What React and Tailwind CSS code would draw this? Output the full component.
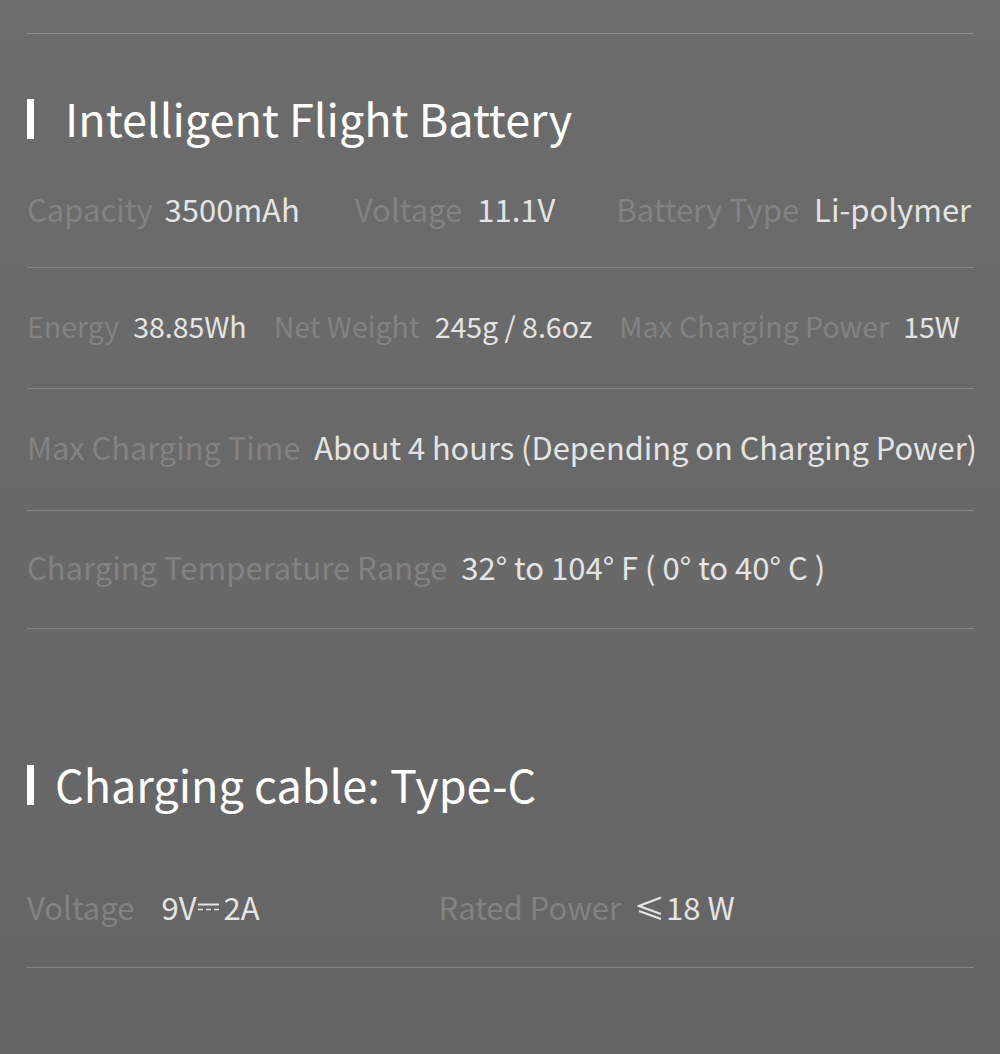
import React from 'react';

const FONT = { fontFamily: '"Noto Sans CJK SC", "Noto Sans", "DejaVu Sans", sans-serif' };

// label in dim grey, value in light grey
const Spec = ({ label, value, gap = 'ml-[15px]', className = '' }) => (
  <div className={`flex items-center whitespace-nowrap ${className}`}>
    <span className="text-[#828282]">{label}</span>
    <span className={`${gap} flex items-center text-[#e4e4e4]`}>{value}</span>
  </div>
);

const Heading = ({ children, gap }) => (
  <div className="flex items-center h-[60px]">
    <div className="w-[7px] h-[40px] bg-white" />
    <h2 className={`${gap} pb-[4px] text-[45px] leading-none text-white font-normal`}>{children}</h2>
  </div>
);

const DcSymbol = () => (
  <svg width="21" height="8" viewBox="0 0 21 8" className="mx-[1px] -mt-[2px]">
    <line x1="0" y1="1.5" x2="21" y2="1.5" stroke="#e4e4e4" strokeWidth="2" />
    <line x1="0" y1="6.5" x2="21" y2="6.5" stroke="#e4e4e4" strokeWidth="1.6" strokeDasharray="5 3" />
  </svg>
);

const LeqSymbol = () => (
  <svg width="25" height="24" viewBox="0 0 25 24" className="mr-[4px]">
    <polyline points="24,1.5 2,10 24,18" fill="none" stroke="#e4e4e4" strokeWidth="2.2" />
    <line x1="2" y1="15" x2="24" y2="23" stroke="#e4e4e4" strokeWidth="2.2" />
  </svg>
);

export default function App() {
  return (
    <div
      className="w-full min-h-[1054px] bg-gradient-to-b from-[#6c6c6c] to-[#656565]"
      style={FONT}
    >
      <div className="pl-[27px] pr-[26px] pt-[33px]">
        {/* top divider */}
        <div className="border-t border-[#8c8c8c]" />

        {/* Intelligent Flight Battery */}
        <div className="mt-[55px]">
          <Heading gap="ml-[31px]">Intelligent Flight Battery</Heading>
        </div>

        <div className="flex items-center h-[119px] pt-[2px] text-[31px] border-b border-[#858585]">
          <Spec label="Capacity" value="3500mAh" gap="ml-[12px]" />
          <Spec label="Voltage" value="11.1V" className="ml-[55px]" />
          <Spec label="Battery Type" value="Li-polymer" className="ml-[61px]" />
        </div>

        <div className="flex items-center h-[121px] pb-[4px] text-[28.5px] border-b border-[#858585]">
          <Spec label="Energy" value="38.85Wh" gap="ml-[14px]" />
          <Spec label="Net Weight" value="245g / 8.6oz" className="ml-[27px]" />
          <Spec label="Max Charging Power" value="15W" gap="ml-[14px]" className="ml-[27px]" />
        </div>

        <div className="flex items-center h-[122px] pb-[4px] text-[30.8px] border-b border-[#858585]">
          <Spec label="Max Charging Time" value="About 4 hours (Depending on Charging Power)" gap="ml-[14px]" />
        </div>

        <div className="flex items-center h-[118px] pb-[4px] text-[31px] border-b border-[#858585]">
          <Spec label="Charging Temperature Range" value="32° to 104° F ( 0° to 40° C )" gap="ml-[14px]" />
        </div>

        {/* Charging cable */}
        <div className="mt-[126px]">
          <Heading gap="ml-[21px]">Charging cable: Type-C</Heading>
        </div>

        <div className="flex items-center h-[120px] mt-[33px] text-[31px] border-b border-[#858585]">
          <Spec
            label="Voltage"
            value={<>9V<DcSymbol /><span className="ml-[4px]">2A</span></>}
            gap="ml-[27px]"
          />
          <Spec
            label="Rated Power"
            value={<><LeqSymbol />18 W</>}
            gap="ml-[16px]"
            className="ml-[179px]"
          />
        </div>
      </div>
    </div>
  );
}
